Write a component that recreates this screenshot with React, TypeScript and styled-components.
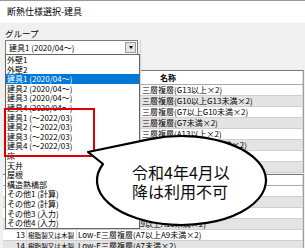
import React from "react";
import styled, { createGlobalStyle } from "styled-components";

const GlobalStyle = createGlobalStyle`
  html, body {
    margin: 0;
    padding: 0;
    background: #f0f0f0;
  }
  body {
    font-family: "Noto Sans CJK JP", "Noto Sans", sans-serif;
    color: #000;
  }
`;

const Window = styled.div`
  position: relative;
  width: 305px;
  height: 248px;
  overflow: hidden;
  background: #f0f0f0;
  border-top: 1px solid #9a9a9a;
  box-sizing: border-box;
`;

const TitleBar = styled.div`
  height: 22px;
  padding-left: 7px;
  background: #fff;
  font-size: 9px;
  line-height: 22px;
`;

const Upper = styled.div`
  display: flex;
  height: 151px;
`;

const LeftPane = styled.div`
  width: 135px;
  padding: 5px 0 0 5px;
  flex-shrink: 0;
`;

const GroupLabel = styled.div`
  height: 12px;
  font-size: 8.5px;
  line-height: 11px;
`;

const ComboWrap = styled.div`
  position: relative;
  z-index: 2;
`;

const Combo = styled.div`
  display: flex;
  align-items: center;
  justify-content: space-between;
  width: 133px;
  height: 15px;
  box-sizing: border-box;
  padding: 0 1px 0 3px;
  background: #fff;
  border: 1px solid #7a7a7a;
  font-size: 8px;
`;

const ComboButton = styled.div`
  display: flex;
  align-items: center;
  justify-content: center;
  width: 11px;
  height: 11px;
  box-sizing: border-box;
  background: #e5e5e5;
  border: 1px solid #9c9c9c;
  &::after {
    content: "";
    border-left: 2.5px solid transparent;
    border-right: 2.5px solid transparent;
    border-top: 3px solid #000;
  }
`;

const DropList = styled.ul`
  position: absolute;
  top: calc(100% - 1px);
  left: 0;
  width: 135px;
  margin: 0;
  padding: 0;
  list-style: none;
  box-sizing: border-box;
  background: #fff;
  border: 1px solid #646464;
`;

const DropItem = styled.li<{ $selected?: boolean }>`
  height: 9.6px;
  padding-left: 1px;
  font-size: 8px;
  line-height: 9.6px;
  white-space: nowrap;
  background: ${(p) => (p.$selected ? "#0078d7" : "transparent")};
  color: ${(p) => (p.$selected ? "#fff" : "#000")};
`;

const Highlight = styled.div`
  position: absolute;
  left: -2px;
  top: 53px;
  width: 91px;
  height: 49px;
  box-sizing: border-box;
  border: 2px solid #dc0000;
`;

const RightPane = styled.div`
  flex: 1;
  margin-top: 17px;
  padding: 30px 1px 0 0;
  border-left: 1px solid #d4d4d4;
`;

const Grid = styled.div`
  border-top: 1px solid #7a7a7a;
  border-right: 1px solid #a0a0a0;
  background: #fff;
`;

const HeadRow = styled.div<{ $h: number }>`
  display: flex;
  height: ${(p) => p.$h}px;
  box-sizing: border-box;
  background: #fff;
  border-bottom: 1px solid #a8a8a8;
  font-size: 8px;
  font-weight: bold;
  line-height: ${(p) => p.$h - 1}px;
`;

const Row = styled.div<{ $alt: boolean }>`
  display: flex;
  height: 11px;
  box-sizing: border-box;
  background: ${(p) => (p.$alt ? "#e4e4e4" : "#fff")};
  border-bottom: 1px solid #cfcfcf;
  font-size: 8px;
  line-height: 10px;
  white-space: nowrap;
  overflow: hidden;
`;

const Cell = styled.div<{ $w?: number; $align?: string; $size?: number }>`
  ${(p) => (p.$w ? `width: ${p.$w}px; flex-shrink: 0;` : "flex: 1;")}
  box-sizing: border-box;
  padding: 0 1px;
  text-align: ${(p) => p.$align || "left"};
  font-size: ${(p) => p.$size || 8}px;
  border-right: 1px solid #d8d8d8;
  overflow: hidden;
`;

const Lower = styled.div`
  padding: 0 1px 0 3px;
`;

const CalloutLayer = styled.div`
  position: absolute;
  inset: 0;
  z-index: 5;
  pointer-events: none;
`;

const CalloutText = styled.div`
  position: absolute;
  left: 132px;
  top: 162px;
  font-size: 16px;
  line-height: 19px;
  color: #0a0a0a;
  white-space: nowrap;
`;

const groups = [
  "外壁1",
  "外壁2",
  "建具1 (2020/04～)",
  "建具2 (2020/04～)",
  "建具3 (2020/04～)",
  "建具4 (2020/04～)",
  "建具1 (～2022/03)",
  "建具2 (～2022/03)",
  "建具3 (～2022/03)",
  "建具4 (～2022/03)",
  "床",
  "天井",
  "屋根",
  "構造熱橋部",
  "その他1 (計算)",
  "その他2 (計算)",
  "その他3 (入力)",
  "その他4 (入力)",
];

const names = [
  "三層複層(G13以上×2)",
  "三層複層(G10以上G13未満×2)",
  "三層複層(G7以上G10未満×2)",
  "三層複層(G7未満×2)",
  "三層複層(A13以上×2)",
  "三層複層(A9以上A13未満×2)",
  "三層複層(A7以上A9未満×2)",
  "三層複層(A7未満×2)",
];

const lowerRows = [
  { no: 9, name: "Low-E三層複層(G7未満×2)" },
  { no: 10, name: "Low-E三層複層(A13以上×2)" },
  { no: 11, name: "Low-E三層複層(A9以上A13未満×2)" },
  { no: 12, name: "Low-E三層複層(A9以上A13未満×2)" },
  { no: 13, name: "Low-E三層複層(A7以上A9未満×2)" },
  { no: 14, name: "Low-E三層複層(A7未満×2)" },
];

const Callout: React.FC = () => (
  <CalloutLayer>
    <svg width="305" height="248" viewBox="0 0 305 248">
      <path
        d="M 150 138.2 A 84.5 44.5 0 1 1 103 163 L 88 151 Z"
        fill="#fff"
        stroke="#000"
        strokeWidth="2.2"
        strokeLinejoin="round"
      />
    </svg>
    <CalloutText>
      令和4年4月以
      <br />
      降は利用不可
    </CalloutText>
  </CalloutLayer>
);

export default function App() {
  return (
    <>
      <GlobalStyle />
      <Window>
        <TitleBar>断熱仕様選択-建具</TitleBar>
        <Upper>
          <LeftPane>
            <GroupLabel>グループ</GroupLabel>
            <ComboWrap>
              <Combo>
                <span>建具1 (2020/04～)</span>
                <ComboButton />
              </Combo>
              <DropList>
                {groups.map((g, i) => (
                  <DropItem key={g} $selected={i === 2}>
                    {g}
                  </DropItem>
                ))}
                <Highlight />
              </DropList>
            </ComboWrap>
          </LeftPane>
          <RightPane>
            <Grid>
              <HeadRow $h={14}>
                <Cell style={{ paddingLeft: 19 }}>名称</Cell>
              </HeadRow>
              {names.map((n, i) => (
                <Row key={n} $alt={i % 2 === 1}>
                  <Cell>{n}</Cell>
                </Row>
              ))}
            </Grid>
          </RightPane>
        </Upper>
        <Lower>
          <Grid>
            <HeadRow $h={11}>
              <Cell $w={24} $align="right">No</Cell>
              <Cell $w={50}>枠</Cell>
              <Cell>ガラス</Cell>
            </HeadRow>
            {lowerRows.map((r) => (
              <Row key={r.no} $alt={r.no % 2 === 0}>
                <Cell $w={24} $align="right">{r.no}</Cell>
                <Cell $w={50} $size={6.6}>樹脂製又は木製</Cell>
                <Cell>{r.name}</Cell>
              </Row>
            ))}
          </Grid>
        </Lower>
        <Callout />
      </Window>
    </>
  );
}
